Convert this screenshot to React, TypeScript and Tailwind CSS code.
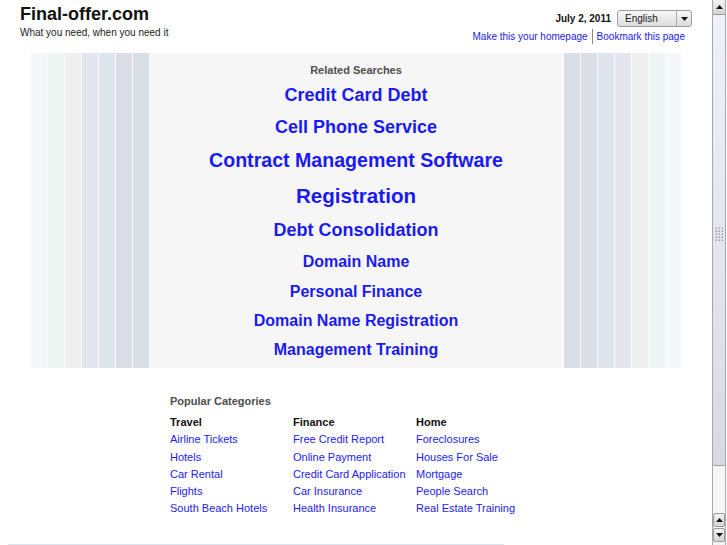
import React from 'react';

const leftStripes = [
  'bg-[#f6f7fb]',
  'bg-[#eef6f4]',
  'bg-[#efefef]',
  'bg-[#e5e5ef]',
  'bg-[#dde5ee]',
  'bg-[#dddde5]',
  'bg-[#d6dee6]',
];
const rightStripes = [...leftStripes].reverse();

const related = [
  { t: 'Credit Card Debt', c: 'text-[18px] h-[32px]' },
  { t: 'Cell Phone Service', c: 'text-[18px] h-[32px]' },
  { t: 'Contract Management Software', c: 'text-[19.6px] h-[36px]' },
  { t: 'Registration', c: 'text-[20.6px] h-[34px]' },
  { t: 'Debt Consolidation', c: 'text-[18px] h-[34px]' },
  { t: 'Domain Name', c: 'text-[16px] h-[30px]' },
  { t: 'Personal Finance', c: 'text-[16px] h-[29px]' },
  { t: 'Domain Name Registration', c: 'text-[16px] h-[29px]' },
  { t: 'Management Training', c: 'text-[16px] h-[29px]' },
];

const cats = [
  { h: 'Travel', items: ['Airline Tickets', 'Hotels', 'Car Rental', 'Flights', 'South Beach Hotels'] },
  { h: 'Finance', items: ['Free Credit Report', 'Online Payment', 'Credit Card Application', 'Car Insurance', 'Health Insurance'] },
  { h: 'Home', items: ['Foreclosures', 'Houses For Sale', 'Mortgage', 'People Search', 'Real Estate Training'] },
];

function Arrow({ down }: { down?: boolean }) {
  return (
    <svg width="7" height="4" viewBox="0 0 7 4">
      {down ? <polygon points="0,0 7,0 3.5,4" fill="#111" /> : <polygon points="0,4 7,4 3.5,0" fill="#111" />}
    </svg>
  );
}

function ScrollButton({ down }: { down?: boolean }) {
  return (
    <div className="h-[14px] w-full flex items-center justify-center bg-gradient-to-b from-[#f4f4f4] to-[#d4d4d8] border border-[#9a9a9a] rounded-[2px]">
      <Arrow down={down} />
    </div>
  );
}

function Scrollbar() {
  return (
    <div className="absolute left-[711px] top-0 w-[16px] h-[545px] bg-white">
      <div className="ml-[1px] w-[14px] h-full flex flex-col bg-[#f3f3f3] border-x border-[#a8a8a8]">
        <div className="h-[15px] flex items-center justify-center bg-gradient-to-b from-[#f4f4f4] to-[#d4d4d8] border-b border-[#9a9a9a]">
          <Arrow />
        </div>
        <div className="h-[451px] flex items-center justify-center bg-gradient-to-b from-[#edf1f8] via-[#e4e6ee] to-[#d9d9e1] border-b border-[#9a9a9a] rounded-b-[2px]">
          <svg width="9" height="14" viewBox="0 0 9 14" className="mt-[-12px]">
            {[0, 3, 6, 9, 12].map((y) =>
              [0, 3, 6].map((x) => <rect key={`${x}-${y}`} x={x + 0.5} y={y + 0.5} width="1.5" height="1.5" fill="#a0a0a8" />)
            )}
          </svg>
        </div>
        <div className="flex-1 bg-[#f6f6f6]" />
        <div className="flex flex-col gap-[1px] pb-[3px]">
          <ScrollButton />
          <ScrollButton down />
        </div>
      </div>
    </div>
  );
}

export default function App() {
  return (
    <div className="relative w-[727px] h-[545px] overflow-hidden bg-white [font-family:'Liberation_Sans',Arial,sans-serif]">
      <div className="w-[711px]">
        {/* Header */}
        <div className="h-[53px] flex justify-between">
          <div className="pl-[20px] pt-[3px]">
            <div className="text-[18px] leading-[22px] font-bold text-[#111]">Final-offer.com</div>
            <div className="mt-[2px] text-[10px] leading-[12px] text-[#222]">What you need, when you need it</div>
          </div>
          <div className="pr-[19px] pt-[10px] flex flex-col items-end">
            <div className="h-[17px] flex items-center gap-[6px]">
              <span className="text-[10px] font-bold text-[#111]">July 2, 2011</span>
              <div className="w-[75px] h-[17px] flex items-stretch border border-[#9c9c9c] rounded-[3px] bg-gradient-to-b from-[#f8f8f8] to-[#dcdcdc]">
                <span className="flex-1 pl-[7px] text-[10px] leading-[15px] text-[#222]">English</span>
                <span className="w-[15px] border-l border-[#a8a8a8] flex items-center justify-center">
                  <Arrow down />
                </span>
              </div>
            </div>
            <div className="mt-[2px] mr-[7px] flex items-center text-[10px] leading-[14px] text-[#2222ee]">
              <span>Make this your homepage</span>
              <span className="ml-[4px] pl-[4px] border-l border-[#888] h-[15px] leading-[15px]">Bookmark this page</span>
            </div>
          </div>
        </div>

        {/* Banner */}
        <div className="ml-[31px] w-[651px] h-[315px] flex">
          <div className="flex gap-[1px] bg-[#fafafa] pr-[1px]">
            {leftStripes.map((c, i) => (
              <div key={i} className={`w-[16px] ${c}`} />
            ))}
          </div>
          <div className="flex-1 bg-[#f6f6f6] flex flex-col items-center pt-[10px]">
            <div className="text-[11px] leading-[14px] font-bold text-[#4d4d4d]">Related Searches</div>
            <div className="mt-[2px] flex flex-col items-center">
              {related.map((r) => (
                <div key={r.t} className={`${r.c} flex items-center font-bold text-[#1a1af2]`}>
                  {r.t}
                </div>
              ))}
            </div>
          </div>
          <div className="flex gap-[1px] bg-[#fafafa] pl-[2px]">
            {rightStripes.map((c, i) => (
              <div key={i} className={`w-[16px] ${c}`} />
            ))}
          </div>
        </div>

        {/* Popular categories */}
        <div className="ml-[31px] w-[651px] pl-[139px] mt-[27px]">
          <div className="text-[11px] leading-[13px] font-bold text-[#4d4d4d]">Popular Categories</div>
          <div className="mt-[6px] grid grid-cols-[123px_123px_123px]">
            {cats.map((c) => (
              <div key={c.h} className="flex flex-col text-[11px] leading-[17.25px]">
                <div className="font-bold text-[#111]">{c.h}</div>
                {c.items.map((it) => (
                  <div key={it} className="text-[#2222ee] whitespace-nowrap">{it}</div>
                ))}
              </div>
            ))}
          </div>
        </div>

        <div className="ml-[8px] w-[496px] mt-[26px] border-t border-[#dde5ee]" />
      </div>
      <Scrollbar />
    </div>
  );
}
